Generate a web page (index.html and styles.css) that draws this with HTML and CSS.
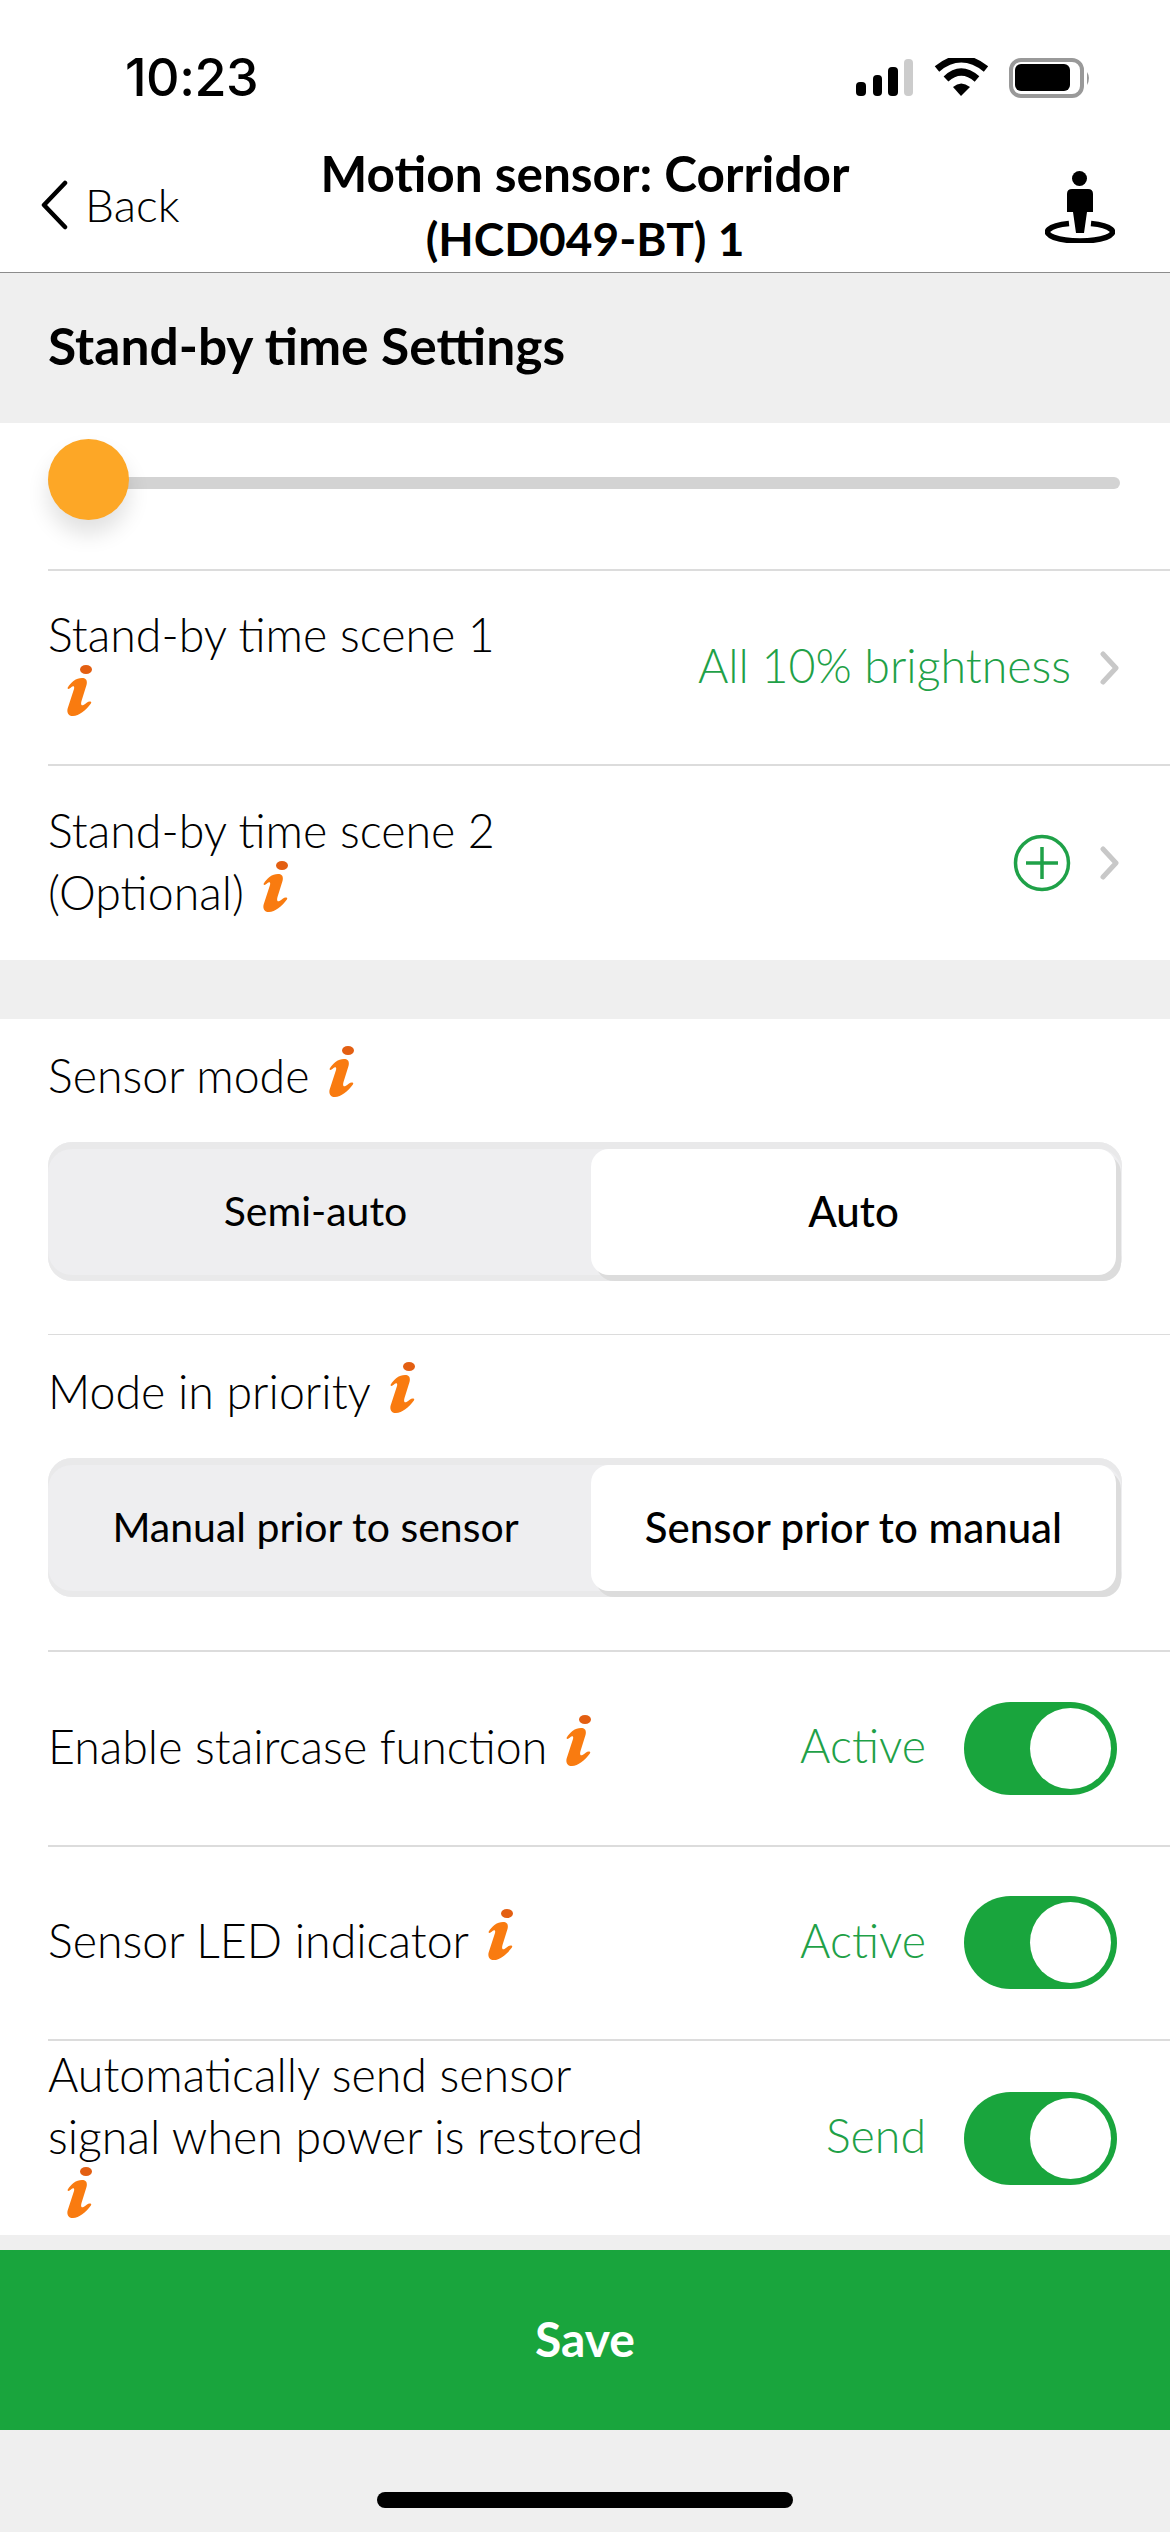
FILE: index.html

```html
<!DOCTYPE html>
<html lang="en">
<head>
    <meta charset="UTF-8">
    <title>Motion sensor: Corridor</title>
    <link rel="stylesheet" href="styles.css">
</head>
<body>
    <svg class="defs" width="0" height="0">
        <symbol id="info" viewBox="0 0 25 51">
            <ellipse cx="19" cy="4.5" rx="6" ry="4.5" fill="#e35f12"/>
            <path fill="#f97b10" d="M0.5 23 C4 17 9 13 15 13 C19.5 13 20.5 16 19.5 20 L14.5 36 C13.5 40 14.5 41 16.5 40 C19 38.5 21 36 23.5 36.5 C24.5 37 24.5 38 23.5 39 C19 45 12 51 6 51 C1 51 -0.5 47 0.8 43 L7 24 C7.8 21 6 20.5 4.5 22 C3 23.5 1 25 0.5 23 Z"/>
        </symbol>
        <symbol id="chevron" viewBox="0 0 20 34">
            <path d="M3 3 L16 17 L3 31" fill="none" stroke="#c8c8c8" stroke-width="5" stroke-linecap="round" stroke-linejoin="round"/>
        </symbol>
    </svg>

    <div class="status-bar">
        <span class="time">10:23</span>
        <svg class="status-icons" width="236" height="40" viewBox="0 0 236 40">
            <rect x="1" y="24" width="10" height="14" rx="4" fill="#000"/>
            <rect x="18" y="17" width="9" height="21" rx="4" fill="#000"/>
            <rect x="33" y="9" width="10" height="29" rx="4" fill="#000"/>
            <rect x="49" y="1" width="9" height="37" rx="4" fill="#ccc"/>
            <path d="M82 11 Q106 -9 131 11" fill="none" stroke="#000" stroke-width="7"/>
            <path d="M91 21 Q106 7 122 21" fill="none" stroke="#000" stroke-width="7"/>
            <path d="M98 29 Q106 22 115 29 L106 38 Z" fill="#000"/>
            <rect x="156" y="2" width="71" height="36" rx="10" fill="none" stroke="#999" stroke-width="4"/>
            <rect x="160" y="6" width="55" height="27" rx="6" fill="#000"/>
            <path d="M232 14 Q236 20 232 27 Z" fill="#999"/>
        </svg>
    </div>

    <div class="nav-bar">
        <div class="back">
            <svg width="28" height="50" viewBox="0 0 28 50"><path d="M25 3 L4 25 L25 47" fill="none" stroke="#000" stroke-width="4.5" stroke-linecap="round" stroke-linejoin="round"/></svg>
            <span>Back</span>
        </div>
        <h1 class="nav-title">Motion sensor: Corridor<br><span class="model">(HCD049-BT) 1</span></h1>
        <svg class="person" width="70" height="72" viewBox="0 0 70 72">
            <circle cx="34.5" cy="7.5" r="7.5" fill="#000"/>
            <path d="M22 23 Q22 18 27 18 H43 Q48 18 48 23 V41 H42 L39 62 H31 L28 41 H22 Z" fill="#000"/>
            <path d="M24 52.5 A32.5 9 0 1 0 46 52.5" fill="none" stroke="#000" stroke-width="5.5"/>
        </svg>
    </div>

    <div class="section-head">Stand-by time Settings</div>

    <div class="panel">
        <div class="slider">
            <div class="track"><div class="thumb"></div></div>
        </div>
        <div class="row row-scene">
            <div class="label">Stand-by time scene 1<br><svg class="info"><use href="#info"/></svg></div>
            <div class="row-end">
                <span class="value">All 10% brightness</span>
                <svg class="chevron"><use href="#chevron"/></svg>
            </div>
        </div>
        <div class="row row-scene row-last">
            <div class="label">Stand-by time scene 2<br>(Optional)<svg class="info"><use href="#info"/></svg></div>
            <div class="row-end">
                <svg class="plus" width="58" height="58" viewBox="0 0 58 58">
                    <circle cx="29" cy="29" r="26.5" fill="none" stroke="#1fa148" stroke-width="3.5"/>
                    <path d="M13 29 H45 M29 13 V45" fill="none" stroke="#1fa148" stroke-width="3.5"/>
                </svg>
                <svg class="chevron"><use href="#chevron"/></svg>
            </div>
        </div>
    </div>

    <div class="panel panel-modes">
        <div class="mode-block">
            <div class="label">Sensor mode<svg class="info"><use href="#info"/></svg></div>
            <div class="segments">
                <div class="segment">Semi-auto</div>
                <div class="segment active">Auto</div>
            </div>
        </div>
        <div class="mode-block">
            <div class="label">Mode in priority<svg class="info"><use href="#info"/></svg></div>
            <div class="segments">
                <div class="segment">Manual prior to sensor</div>
                <div class="segment active">Sensor prior to manual</div>
            </div>
        </div>
        <div class="row row-toggle">
            <div class="label">Enable staircase function<svg class="info"><use href="#info"/></svg></div>
            <div class="row-end">
                <span class="value">Active</span>
                <div class="toggle"><div class="knob"></div></div>
            </div>
        </div>
        <div class="row row-toggle">
            <div class="label">Sensor LED indicator<svg class="info"><use href="#info"/></svg></div>
            <div class="row-end">
                <span class="value">Active</span>
                <div class="toggle"><div class="knob"></div></div>
            </div>
        </div>
        <div class="row row-toggle row-last">
            <div class="label">Automatically send sensor<br>signal when power is restored<br><svg class="info"><use href="#info"/></svg></div>
            <div class="row-end">
                <span class="value">Send</span>
                <div class="toggle"><div class="knob"></div></div>
            </div>
        </div>
    </div>

    <div class="save">Save</div>

    <div class="home-area"><div class="home-bar"></div></div>
</body>
</html>
```

FILE: styles.css

```css
body {
    margin: 0;
    width: 1170px;
    height: 2532px;
    overflow: hidden;
    background: #efefef;
    color: #000;
    font-family: "Lato", "Open Sans", sans-serif;
}

.defs {
    position: absolute;
}

.status-bar {
    height: 130px;
    background: white;
    display: flex;
    justify-content: space-between;
    box-sizing: border-box;
    padding: 50px 79px 0 125px;
}

.time {
    font-family: "Inter", sans-serif;
    font-size: 52px;
    font-weight: 500;
    line-height: 56px;
    letter-spacing: -0.5px;
}

.status-icons {
    margin-top: 8px;
}

.nav-bar {
    height: 142px;
    background: white;
    border-bottom: 1px solid #8c8c8c;
    display: flex;
    align-items: flex-start;
    justify-content: space-between;
    padding: 0 55px 0 40px;
    position: relative;
}

.back {
    display: flex;
    align-items: center;
    gap: 17px;
    margin-top: 50px;
    font-size: 46px;
    font-weight: 300;
    line-height: 50px;
}

.nav-title {
    position: absolute;
    left: 0;
    right: 0;
    top: 11px;
    margin: 0;
    text-align: center;
    font-size: 49.5px;
    font-weight: 700;
    line-height: 64px;
}

.model {
    font-size: 46px;
}

.person {
    margin-top: 41px;
}

.section-head {
    height: 150px;
    line-height: 145px;
    padding-left: 48px;
    font-size: 51.5px;
    font-weight: 700;
}

.panel {
    background: white;
}

.panel-modes {
    margin-top: 59px;
}

.slider {
    height: 146px;
    padding: 54px 50px 0 48px;
    box-sizing: border-box;
}

.track {
    position: relative;
    height: 12px;
    border-radius: 6px;
    background: #d3d3d3;
}

.thumb {
    position: absolute;
    left: 0;
    top: -38px;
    width: 81px;
    height: 81px;
    border-radius: 50%;
    background: #fda726;
    box-shadow: 0 14px 22px rgba(0, 0, 0, 0.12);
}

.row {
    margin-left: 48px;
    padding-right: 50px;
    border-top: 2px solid #dcdcdc;
    display: flex;
    align-items: center;
    justify-content: space-between;
    box-sizing: border-box;
}

.row-scene {
    height: 195px;
}

.row-scene.row-last {
    height: 196px;
}

.row-toggle {
    height: 194.5px;
    padding-right: 53px;
}

.row-toggle.row-last {
    height: 196px;
}

.label {
    font-size: 46.5px;
    font-weight: 300;
    line-height: 62px;
    padding-bottom: 5px;
}

.info {
    width: 25px;
    height: 51px;
    margin-left: 19px;
    vertical-align: -2px;
}

.row-end {
    display: flex;
    align-items: center;
}

.value {
    color: #1fa148;
    font-size: 46.5px;
    font-weight: 300;
    padding-bottom: 6px;
}

.chevron {
    width: 20px;
    height: 34px;
    margin-left: 29px;
}

.mode-block {
    margin-left: 48px;
    padding: 25px 48px 53px 0;
}

.mode-block + .mode-block {
    border-top: 1px solid #dcdcdc;
}

.mode-block .label {
    height: 62px;
    padding-bottom: 0;
}

.mode-block .info {
    vertical-align: -4px;
}

.mode-block .segments {
    margin-top: 36px;
}

.segments {
    height: 139px;
    box-sizing: border-box;
    padding: 7px 6px 6px 0;
    display: flex;
    background: #eeeef0;
    border-radius: 24px;
    box-shadow: inset 0 7px 0 #e9e9ea, inset 0 -6px 0 #e9e9ea;
}

.segment {
    flex: 1;
    display: flex;
    align-items: center;
    justify-content: center;
    box-sizing: border-box;
    padding: 0 8px 3px 0;
    font-size: 41px;
    font-weight: 400;
    border-radius: 18px;
}

.segment.active {
    flex: 0 0 525px;
    padding-right: 0;
    background: white;
    font-size: 42px;
    font-weight: 500;
    box-shadow: 5px 6px 0 #dcdcdc;
}

.toggle {
    width: 153px;
    height: 93px;
    margin-left: 38px;
    box-sizing: border-box;
    padding: 6px;
    display: flex;
    justify-content: flex-end;
    border-radius: 47px;
    background: #19a53d;
}

.knob {
    width: 81px;
    height: 81px;
    border-radius: 50%;
    background: white;
}

.save {
    margin-top: 15px;
    height: 180px;
    line-height: 178px;
    text-align: center;
    background: #19a53d;
    color: white;
    font-size: 48px;
    font-weight: 700;
}

.home-area {
    padding-top: 62px;
}

.home-bar {
    width: 416px;
    height: 16px;
    margin: 0 auto;
    border-radius: 8px;
    background: black;
}
```
